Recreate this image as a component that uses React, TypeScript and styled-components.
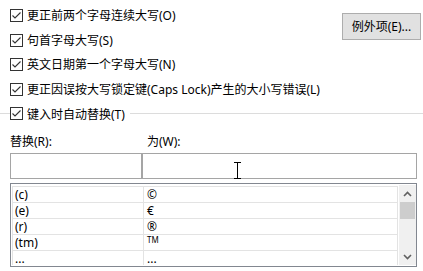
import React from "react";
import styled, { createGlobalStyle } from "styled-components";

const GlobalStyle = createGlobalStyle`
  html, body { margin: 0; padding: 0; background: #ffffff; }
  body {
    font-family: "Noto Sans", "Noto Sans CJK SC", sans-serif;
    font-size: 12px;
    color: #000000;
  }
`;

const Page = styled.div`
  position: relative;
  width: 423px;
  height: 271px;
  overflow: hidden;
  background: #ffffff;
  padding-top: 9px;
  box-sizing: border-box;
`;

const Top = styled.div`
  display: flex;
  justify-content: space-between;
  align-items: flex-start;
`;

const Options = styled.div`
  display: flex;
  flex-direction: column;
  padding-left: 10px;
`;

const CheckRow = styled.label`
  display: flex;
  align-items: center;
  height: 13px;
  margin-bottom: 11.5px;
  white-space: nowrap;
  line-height: 13px;
`;

const Box = styled.span`
  width: 11px;
  height: 11px;
  border: 1px solid #333333;
  background: #ffffff;
  display: flex;
  align-items: center;
  justify-content: center;
  flex: none;
  margin-right: 4px;
`;

const ExceptButton = styled.button`
  width: 79px;
  height: 27px;
  margin-top: 4px;
  margin-right: 2px;
  background: #e1e1e1;
  border: 1px solid #adadad;
  font: inherit;
  font-size: 12px;
  color: #000;
  padding: 0;
  line-height: 25px;
`;

const GroupRow = styled.div`
  display: flex;
  align-items: center;
  height: 13px;
`;

const Rule = styled.div<{ $w?: number }>`
  height: 1px;
  background: #dcdcdc;
  ${(p) => (p.$w ? `width: ${p.$w}px; flex: none;` : `flex: 1; margin-left: 5px;`)}
`;

const Labels = styled.div`
  display: grid;
  grid-template-columns: 132px 275px;
  margin: 13px 0 0 10px;
  height: 18px;
  line-height: 18px;
`;

const FieldLabel = styled.span<{ $pad?: number }>`
  padding-left: ${(p) => p.$pad ?? 0}px;
`;

const Fields = styled.div`
  display: grid;
  grid-template-columns: 132px 275px;
  margin: 2px 0 0 10px;
`;

const Input = styled.div`
  height: 26px;
  box-sizing: border-box;
  border: 1px solid #a5a5a5;
  background: #fff;
`;

const ListBox = styled.div`
  margin: 4px 0 0 10px;
  width: 407px;
  height: 84px;
  box-sizing: border-box;
  border: 1px solid #828790;
  padding: 1px;
  display: flex;
  overflow: hidden;
`;

const Grid = styled.div`
  width: 386px;
  flex: none;
  box-sizing: border-box;
  border-top: 1px solid #e3e3e3;
  border-left: 1px solid #e3e3e3;
  margin-top: 1px;
  overflow: hidden;
`;

const Row = styled.div`
  display: grid;
  grid-template-columns: 131px 254px;
  height: 16px;
`;

const Cell = styled.div<{ $pad: number }>`
  border-right: 1px solid #e3e3e3;
  border-bottom: 1px solid #e3e3e3;
  padding-left: ${(p) => p.$pad}px;
  line-height: 15px;
  height: 15px;
  white-space: nowrap;
`;

const TM = styled.span`
  font-size: 8px;
  vertical-align: 4px;
  line-height: 8px;
`;

const ScrollBar = styled.div`
  width: 17px;
  flex: none;
  background: #f0f0f0;
  display: flex;
  flex-direction: column;
  margin-left: 1px;
`;

const Arrow = styled.div`
  height: 17px;
  display: flex;
  align-items: center;
  justify-content: center;
`;

const Thumb = styled.div`
  height: 17px;
  margin: 0 1px;
  background: #cdcdcd;
`;

const Track = styled.div`
  flex: 1;
`;

const Cursor = styled.svg`
  position: absolute;
  left: 233px;
  top: 162px;
`;

const Check = () => (
  <Box>
    <svg width="11" height="11" viewBox="0 0 11 11">
      <path d="M1.5 5.5 L4 8 L9.5 2.5" fill="none" stroke="#333" strokeWidth="1.1" />
    </svg>
  </Box>
);

const rows: [string, React.ReactNode][] = [
  ["(c)", "©"],
  ["(e)", "€"],
  ["(r)", "®"],
  ["(tm)", <TM key="tm">TM</TM>],
  ["...", "..."],
];

export default function App() {
  return (
    <>
      <GlobalStyle />
      <Page>
        <Top>
          <Options>
            <CheckRow><Check />更正前两个字母连续大写(O)</CheckRow>
            <CheckRow><Check />句首字母大写(S)</CheckRow>
            <CheckRow><Check />英文日期第一个字母大写(N)</CheckRow>
            <CheckRow><Check />更正因误按大写锁定键(Caps Lock)产生的大小写错误(L)</CheckRow>
          </Options>
          <ExceptButton>例外项(E)...</ExceptButton>
        </Top>
        <GroupRow>
          <Rule $w={10} />
          <Check />
          <span>键入时自动替换(T)</span>
          <Rule />
        </GroupRow>
        <Labels>
          <FieldLabel>替换(R):</FieldLabel>
          <FieldLabel $pad={5}>为(W):</FieldLabel>
        </Labels>
        <Fields>
          <Input />
          <Input />
        </Fields>
        <ListBox>
          <Grid>
            {rows.map(([a, b], i) => (
              <Row key={i}>
                <Cell $pad={2}>{a}</Cell>
                <Cell $pad={3}>{b}</Cell>
              </Row>
            ))}
          </Grid>
          <ScrollBar>
            <Arrow>
              <svg width="9" height="6" viewBox="0 0 9 6">
                <path d="M1 5 L4.5 1.5 L8 5" fill="none" stroke="#606060" strokeWidth="1.6" />
              </svg>
            </Arrow>
            <Thumb />
            <Track />
            <Arrow>
              <svg width="9" height="6" viewBox="0 0 9 6">
                <path d="M1 1 L4.5 4.5 L8 1" fill="none" stroke="#606060" strokeWidth="1.6" />
              </svg>
            </Arrow>
          </ScrollBar>
        </ListBox>
        <Cursor width="9" height="17" viewBox="0 0 9 17">
          <path d="M1 0.5 H8 M4.5 0.5 V16.5 M1 16.5 H8" fill="none" stroke="#000" strokeWidth="1" />
        </Cursor>
      </Page>
    </>
  );
}
